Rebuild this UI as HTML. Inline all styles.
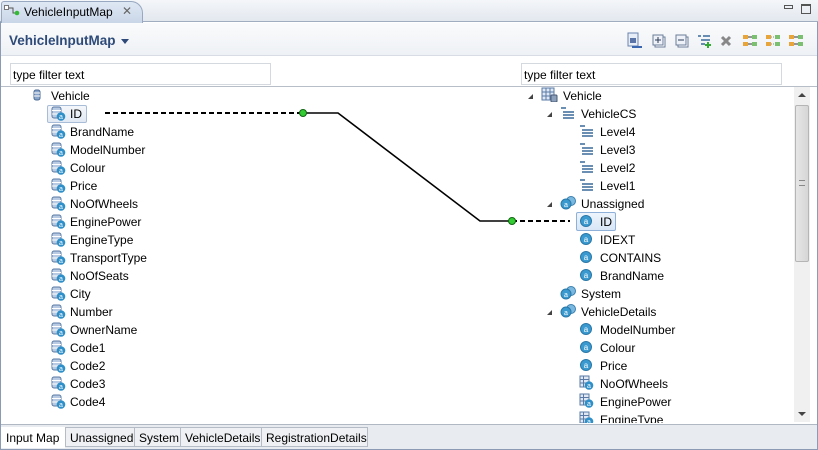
<!DOCTYPE html>
<html><head><style>
*{margin:0;padding:0;box-sizing:border-box}
body{width:818px;height:450px;overflow:hidden;background:#fff;font-family:"Liberation Sans",sans-serif;font-size:12px;color:#000;position:relative}
.abs{position:absolute}
.t{position:absolute;white-space:nowrap;line-height:14px}
.ic{position:absolute;width:15px;height:15px}
.tri{position:absolute;width:0;height:0;border-left:5px solid transparent;border-bottom:5px solid #444}
</style></head><body>
<div class="abs" style="left:0;top:0;width:818px;height:450px;border:1px solid #8c9bb3;"></div>
<div class="abs" style="left:0;top:0;width:818px;height:22px;background:linear-gradient(#f4f6f9,#e3e8ef);border-bottom:1px solid #a0adc0"></div>
<div class="abs" style="left:1px;top:1px;width:142px;height:22px;background:linear-gradient(#dfe8f4,#c9d6e8);border:1px solid #98a8c0;border-bottom:none;border-radius:3px 12px 0 0"></div>
<svg class="abs" style="left:4px;top:5px" width="16" height="12"><rect x="0.5" y="0.5" width="4" height="4" fill="#fff" stroke="#777"/><path d="M5 3h4v5h3" stroke="#555" fill="none"/><circle cx="13" cy="8" r="2.3" fill="#3b3"/></svg>
<div class="t" style="left:24px;top:5px;">VehicleInputMap</div>
<div class="t" style="left:122px;top:4px;color:#666;font-size:12px">✕</div>
<div class="abs" style="left:784px;top:5px;width:9px;height:4px;border:1px solid #555"></div>
<div class="abs" style="left:801px;top:4px;width:10px;height:10px;border:1px solid #555;border-top-width:2px"></div>
<div class="abs" style="left:1px;top:23px;width:816px;height:33px;background:linear-gradient(#fafbfc,#eef1f5);border-bottom:1px solid #d8dde5"></div>
<div class="t" style="left:9px;top:34px;font-size:13.5px;font-weight:bold;color:#2d4a78">VehicleInputMap</div>
<div class="abs" style="left:121px;top:39px;border-left:4px solid transparent;border-right:4px solid transparent;border-top:5px solid #2d4a78"></div>
<svg class="abs" style="left:626px;top:32px" width="190" height="18">
<rect x="2" y="1" width="10" height="13" fill="#e8eef8" stroke="#6a84b0"/><rect x="4" y="6" width="6" height="5" fill="#5a74a8"/><path d="M6 15h10" stroke="#3a66b0" stroke-width="2"/>
<rect x="29" y="5" width="10" height="10" fill="#fff" stroke="#6a7d99"/><rect x="27" y="3" width="10" height="10" fill="#eef2f8" stroke="#6a7d99"/><path d="M29 8h6M32 5v6" stroke="#2a3a55"/>
<rect x="52" y="5" width="10" height="10" fill="#fff" stroke="#6a7d99"/><rect x="50" y="3" width="10" height="10" fill="#eef2f8" stroke="#6a7d99"/><path d="M52 8h6" stroke="#2a3a55"/>
<path d="M72 4h3M77 4h7M75 8h9M75 12h4" stroke="#3a6a9a" stroke-width="1.6"/><path d="M82 10v6M79 13h6" stroke="#3a3" stroke-width="2"/>
<path d="M96 5l8 8M104 5l-8 8" stroke="#888" stroke-width="3"/>
<g fill="#e8a63a"><rect x="117" y="3" width="5" height="4"/><rect x="117" y="10" width="5" height="4"/><rect x="140" y="3" width="5" height="4"/><rect x="140" y="10" width="5" height="4"/><rect x="163" y="3" width="5" height="4"/><rect x="163" y="10" width="5" height="4"/></g>
<g fill="#7ac070"><rect x="126" y="3" width="5" height="4"/><rect x="126" y="10" width="5" height="4"/><rect x="149" y="3" width="5" height="4"/><rect x="149" y="10" width="5" height="4"/><rect x="172" y="3" width="5" height="4"/><rect x="172" y="10" width="5" height="4"/></g>
<path d="M122 5h4M122 12h4M168 5h4M168 12h4" stroke="#333"/><path d="M145 5h4M145 12h4" stroke="#888" stroke-dasharray="1 1"/>
</svg>
<div class="abs" style="left:10px;top:63px;width:261px;height:22px;border:1px solid #d4d9e0;background:#fff"></div>
<div class="t" style="left:13px;top:68px">type filter text</div>
<div class="abs" style="left:521px;top:63px;width:261px;height:22px;border:1px solid #d4d9e0;background:#fff"></div>
<div class="t" style="left:524px;top:68px">type filter text</div>
<div class="abs" style="left:1px;top:86px;width:816px;height:1px;background:#b8bec8"></div>
<div class="abs" style="left:794px;top:87px;width:16px;height:335px;background:#f0f0f0"></div>
<div class="abs" style="left:798px;top:93px;border-left:4px solid transparent;border-right:4px solid transparent;border-bottom:4px solid #444"></div>
<div class="abs" style="left:798px;top:412px;border-left:4px solid transparent;border-right:4px solid transparent;border-top:4px solid #444"></div>
<div class="abs" style="left:795px;top:105px;width:14px;height:157px;background:linear-gradient(90deg,#e6e6e6,#d6d6d6);border:1px solid #b5b5b5;border-radius:2px"></div>
<div class="abs" style="left:799px;top:180px;width:6px;height:6px;border-top:1px solid #888;border-bottom:1px solid #888"></div>
<svg class="abs" style="left:33px;top:89px" width="8" height="12"><rect x="1" y="1" width="6" height="10" rx="2" fill="#8aa6c8" stroke="#4a6a95"/><path d="M1 4h6M1 7h6" stroke="#fff"/></svg>
<div class="t" style="left:51px;top:89px">Vehicle</div>
<div class="abs" style="left:47px;top:105px;width:40px;height:18px;border:1px solid #a8bcd8;border-radius:2px;background:linear-gradient(#f4f7fb,#e2e9f3)"></div>
<div id="lt"></div>
<div id="rt"></div>
<svg class="abs" style="left:0;top:0" width="818" height="450">
<path d="M105 113H303" stroke="#000" stroke-width="2" stroke-dasharray="5 3" fill="none"/>
<path d="M303 113H338L480 221H512" stroke="#000" stroke-width="1.6" fill="none"/>
<path d="M512 221H570" stroke="#000" stroke-width="2" stroke-dasharray="5 3" fill="none"/>
<circle cx="303" cy="113" r="3.5" fill="#3c3" stroke="#161"/>
<circle cx="512" cy="221" r="3.5" fill="#3c3" stroke="#161"/>
</svg>
<div class="abs" style="left:1px;top:424px;width:816px;height:25px;background:#e8ebf0;border-top:1px solid #b0b8c4"></div>
<div class="abs" style="left:1px;top:427px;width:64px;height:21px;background:#fff"></div>
<div class="t" style="left:6px;top:431px">Input Map</div>
<div class="abs" style="left:65px;top:427px;width:303px;height:20px;background:#eef0f3;border:1px solid #b5bcc6"></div>
<div class="abs" style="left:134px;top:428px;width:1px;height:19px;background:#b5bcc6"></div>
<div class="abs" style="left:180px;top:428px;width:1px;height:19px;background:#b5bcc6"></div>
<div class="abs" style="left:261px;top:428px;width:1px;height:19px;background:#b5bcc6"></div>
<div class="t" style="left:70px;top:431px">Unassigned</div>
<div class="t" style="left:139px;top:431px">System</div>
<div class="t" style="left:185px;top:431px">VehicleDetails</div>
<div class="t" style="left:266px;top:431px">RegistrationDetails</div>
<script>
function dbA(x,y){return '<svg class="ic" style="left:'+x+'px;top:'+y+'px" viewBox="0 0 15 15"><rect x="1" y="1" width="9" height="11" rx="2" fill="#b8cbe2" stroke="#5a7aa5"/><path d="M1 4.5h9M1 8h9" stroke="#fff"/><circle cx="10" cy="10.5" r="4.3" fill="#2f8fc8"/><text x="10" y="13" font-size="7" fill="#fff" text-anchor="middle" font-family="Liberation Sans">a</text></svg>'}
function aI(x,y){return '<svg class="ic" style="left:'+x+'px;top:'+y+'px" viewBox="0 0 15 15"><circle cx="7" cy="8" r="5.5" fill="#3a9ad0" stroke="#2a78a8"/><text x="7" y="11" font-size="8" fill="#fff" text-anchor="middle" font-family="Liberation Sans">a</text></svg>'}
function grp(x,y){return '<svg class="ic" style="left:'+x+'px;top:'+y+'px;width:17px" viewBox="0 0 17 15"><circle cx="11" cy="6" r="4.5" fill="#7ab8e0" stroke="#3a80b0"/><circle cx="6" cy="9" r="5" fill="#3a9ad0" stroke="#2a78a8"/><text x="6" y="12" font-size="7" fill="#fff" text-anchor="middle" font-family="Liberation Sans">a</text></svg>'}
function lv(x,y){return '<svg class="ic" style="left:'+x+'px;top:'+y+'px" viewBox="0 0 15 15"><path d="M1 3h5M3 7h11M3 10h11M3 13h11" stroke="#3a6a9a" stroke-width="1.6"/></svg>'}
function tbl(x,y){return '<svg class="ic" style="left:'+x+'px;top:'+y+'px;width:17px" viewBox="0 0 17 15"><rect x="1" y="1" width="12" height="12" fill="#dfe8f4" stroke="#5a7aa5"/><path d="M1 5h12M1 9h12M5 1v12M9 1v12" stroke="#5a7aa5"/><rect x="10" y="8" width="6" height="7" rx="1" fill="#8aa0bb" stroke="#4a5a75"/></svg>'}
function tA(x,y){return '<svg class="ic" style="left:'+x+'px;top:'+y+'px" viewBox="0 0 15 15"><rect x="1" y="1" width="9" height="11" fill="#dfe8f4" stroke="#5a7aa5"/><path d="M1 4.5h9M1 8h9M4.5 1v11" stroke="#5a7aa5"/><circle cx="10" cy="10.5" r="4.3" fill="#2f8fc8"/><text x="10" y="13" font-size="7" fill="#fff" text-anchor="middle" font-family="Liberation Sans">a</text></svg>'}
var L=["ID","BrandName","ModelNumber","Colour","Price","NoOfWheels","EnginePower","EngineType","TransportType","NoOfSeats","City","Number","OwnerName","Code1","Code2","Code3","Code4"];
var h='';L.forEach(function(n,i){var y=113+18*i;h+=dbA(51,y-7)+'<div class="t" style="left:70px;top:'+(y-6)+'px">'+n+'</div>';});
document.getElementById('lt').outerHTML=h;
var R=[[0,'tbl','Vehicle',1],[1,'lv','VehicleCS',1],[2,'lv','Level4'],[2,'lv','Level3'],[2,'lv','Level2'],[2,'lv','Level1'],[1,'grp','Unassigned',1],[2,'a','ID'],[2,'a','IDEXT'],[2,'a','CONTAINS'],[2,'a','BrandName'],[1,'grp','System'],[1,'grp','VehicleDetails',1],[2,'a','ModelNumber'],[2,'a','Colour'],[2,'a','Price'],[2,'tA','NoOfWheels'],[2,'tA','EnginePower'],[2,'tA','EngineType']];
var xs=[563,581,600],is=[541,560,579];h='';
h+='<div class="abs" style="left:576px;top:212px;width:40px;height:19px;border:1px solid #8fb0d8;border-radius:2px;background:linear-gradient(#eef4fc,#d8e6f6)"></div>';
R.forEach(function(r,i){var y=95+18*i;var ix=is[r[0]],f={tbl:tbl,lv:lv,grp:grp,a:aI,tA:tA}[r[1]];
if(r[3])h+='<div class="tri" style="left:'+(ix-13)+'px;top:'+(y-1)+'px"></div>';
h+=f(ix,y-8)+'<div class="t" style="left:'+xs[r[0]]+'px;top:'+(y-6)+'px">'+r[2]+'</div>';});
h+='<div class="abs" style="left:520px;top:423px;width:275px;height:1px;background:#fff"></div>';
document.getElementById('rt').outerHTML=h;
</script>
</body></html>
